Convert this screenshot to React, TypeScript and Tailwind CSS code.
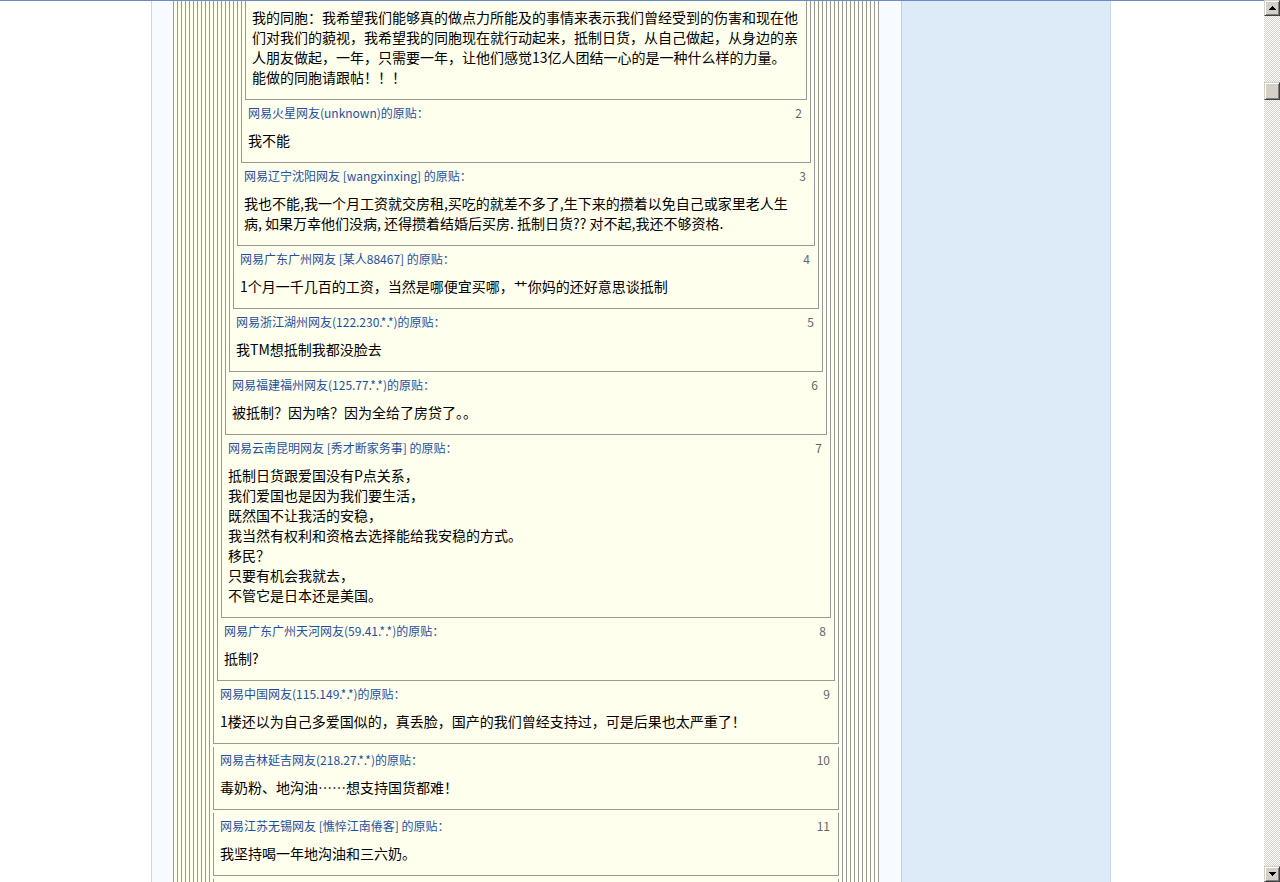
import React from 'react'

type Post = { n: number; who: string; lines: string[] }

// floors 1-9 are nested inside each other, 10+ are stacked below
const nested: Post[] = [
  {
    n: 1,
    who: '',
    lines: [
      '我的同胞：我希望我们能够真的做点力所能及的事情来表示我们曾经受到的伤害和现在他',
      '们对我们的藐视，我希望我的同胞现在就行动起来，抵制日货，从自己做起，从身边的亲',
      '人朋友做起，一年，只需要一年，让他们感觉13亿人团结一心的是一种什么样的力量。',
      '能做的同胞请跟帖！！！',
    ],
  },
  { n: 2, who: '网易火星网友(unknown)的原贴：', lines: ['我不能'] },
  {
    n: 3,
    who: '网易辽宁沈阳网友 [wangxinxing] 的原贴：',
    lines: [
      '我也不能,我一个月工资就交房租,买吃的就差不多了,生下来的攒着以免自己或家里老人生',
      '病, 如果万幸他们没病, 还得攒着结婚后买房. 抵制日货?? 对不起,我还不够资格.',
    ],
  },
  {
    n: 4,
    who: '网易广东广州网友 [某人88467] 的原贴：',
    lines: ['1个月一千几百的工资，当然是哪便宜买哪，艹你妈的还好意思谈抵制'],
  },
  { n: 5, who: '网易浙江湖州网友(122.230.*.*)的原贴：', lines: ['我TM想抵制我都没脸去'] },
  { n: 6, who: '网易福建福州网友(125.77.*.*)的原贴：', lines: ['被抵制？因为啥？因为全给了房贷了。。'] },
  {
    n: 7,
    who: '网易云南昆明网友 [秀才断家务事] 的原贴：',
    lines: [
      '抵制日货跟爱国没有P点关系，',
      '我们爱国也是因为我们要生活，',
      '既然国不让我活的安稳，',
      '我当然有权利和资格去选择能给我安稳的方式。',
      '移民？',
      '只要有机会我就去，',
      '不管它是日本还是美国。',
    ],
  },
  { n: 8, who: '网易广东广州天河网友(59.41.*.*)的原贴：', lines: ['抵制?'] },
  {
    n: 9,
    who: '网易中国网友(115.149.*.*)的原贴：',
    lines: ['1楼还以为自己多爱国似的，真丢脸，国产的我们曾经支持过，可是后果也太严重了！'],
  },
]

const flat: Post[] = [
  { n: 10, who: '网易吉林延吉网友(218.27.*.*)的原贴：', lines: ['毒奶粉、地沟油……想支持国货都难！'] },
  { n: 11, who: '网易江苏无锡网友 [憔悴江南倦客] 的原贴：', lines: ['我坚持喝一年地沟油和三六奶。'] },
]

function Head({ p }: { p: Post }) {
  return (
    <div className="flex justify-between pl-[3px] pr-[5px] text-[12px] leading-[20px]">
      <span className="text-[#1e50a2]">{p.who}</span>
      <span className="text-[#666666]">{p.n}</span>
    </div>
  )
}

function Body({ lines, first }: { lines: string[]; first?: boolean }) {
  return (
    <div
      className={`${first ? 'pt-[6px]' : 'pt-[7px]'} whitespace-nowrap px-[3px] pb-[9px] text-[14px] leading-[20px] text-black`}
    >
      {lines.map((l, i) => (
        <div key={i}>{l}</div>
      ))}
    </div>
  )
}

function Nest({ posts, inner }: { posts: Post[]; inner?: boolean }) {
  const p = posts[posts.length - 1]
  const rest = posts.slice(0, -1)
  return (
    <div className={`border-x border-b border-[#999999] bg-[#ffffee] px-[3px] pb-[3px] ${inner ? 'mb-[3px]' : ''}`}>
      {rest.length > 0 ? (
        <>
          <Nest posts={rest} inner />
          <Head p={p} />
          <Body lines={p.lines} />
        </>
      ) : (
        <Body lines={p.lines} first />
      )}
    </div>
  )
}

function Wrap({ depth, children }: { depth: number; children: React.ReactNode }) {
  if (depth === 0) return <>{children}</>
  return (
    <div className="border-x border-[#999999] bg-[#ffffee] px-[3px]">
      <Wrap depth={depth - 1}>{children}</Wrap>
    </div>
  )
}

function Btn({ children }: { children: React.ReactNode }) {
  return (
    <div className="flex h-[16px] w-[16px] items-center justify-center border border-t-[#d4d0c8] border-l-[#d4d0c8] border-r-[#404040] border-b-[#404040] bg-[#d4d0c8] shadow-[inset_1px_1px_0_#ffffff,inset_-1px_-1px_0_#808080]">
      {children}
    </div>
  )
}

function Scrollbar() {
  return (
    <div className="flex h-full w-[16px] flex-col">
      <Btn>
        <svg width="7" height="4" shapeRendering="crispEdges">
          <polygon points="3,0 4,0 7,4 0,4" fill="#000" />
        </svg>
      </Btn>
      <div className="flex-1 bg-[image:repeating-conic-gradient(#d4d0c8_0_25%,#ffffff_0_50%)] bg-[length:2px_2px] pt-[66px]">
        <div className="h-[18px] w-[16px] border border-t-[#d4d0c8] border-l-[#d4d0c8] border-r-[#404040] border-b-[#404040] bg-[#d4d0c8] shadow-[inset_1px_1px_0_#ffffff,inset_-1px_-1px_0_#808080]" />
      </div>
      <Btn>
        <svg width="7" height="4" shapeRendering="crispEdges">
          <polygon points="0,0 7,0 4,4 3,4" fill="#000" />
        </svg>
      </Btn>
    </div>
  )
}

export default function App() {
  return (
    <div className="flex h-[882px] w-[1280px] overflow-hidden bg-white font-['Noto_Sans_CJK_SC',sans-serif]">
      <div className="flex flex-1 border-t border-[#6a8cc6]">
        <div className="ml-[151px] flex w-[960px] border-x border-[#c4d7ee]">
          {/* posts column */}
          <div className="w-[749px] bg-[#f7fbff] pl-[21px] pr-[22px]">
            <Wrap depth={10}>
              <Nest posts={nested} />
              {flat.map((p) => (
                <div key={p.n} className="mt-[3px] border-x border-b border-[#999999] bg-[#ffffee] p-[3px]">
                  <Head p={p} />
                  <Body lines={p.lines} />
                </div>
              ))}
              {/* next floor starts below the fold */}
              <div className="mt-[3px] h-[40px] border-x border-[#999999] bg-[#ffffee]" />
            </Wrap>
          </div>
          {/* sidebar */}
          <div className="w-[209px] border-l border-[#b9cfe9] bg-[#ddebf8]" />
        </div>
      </div>
      <Scrollbar />
    </div>
  )
}
